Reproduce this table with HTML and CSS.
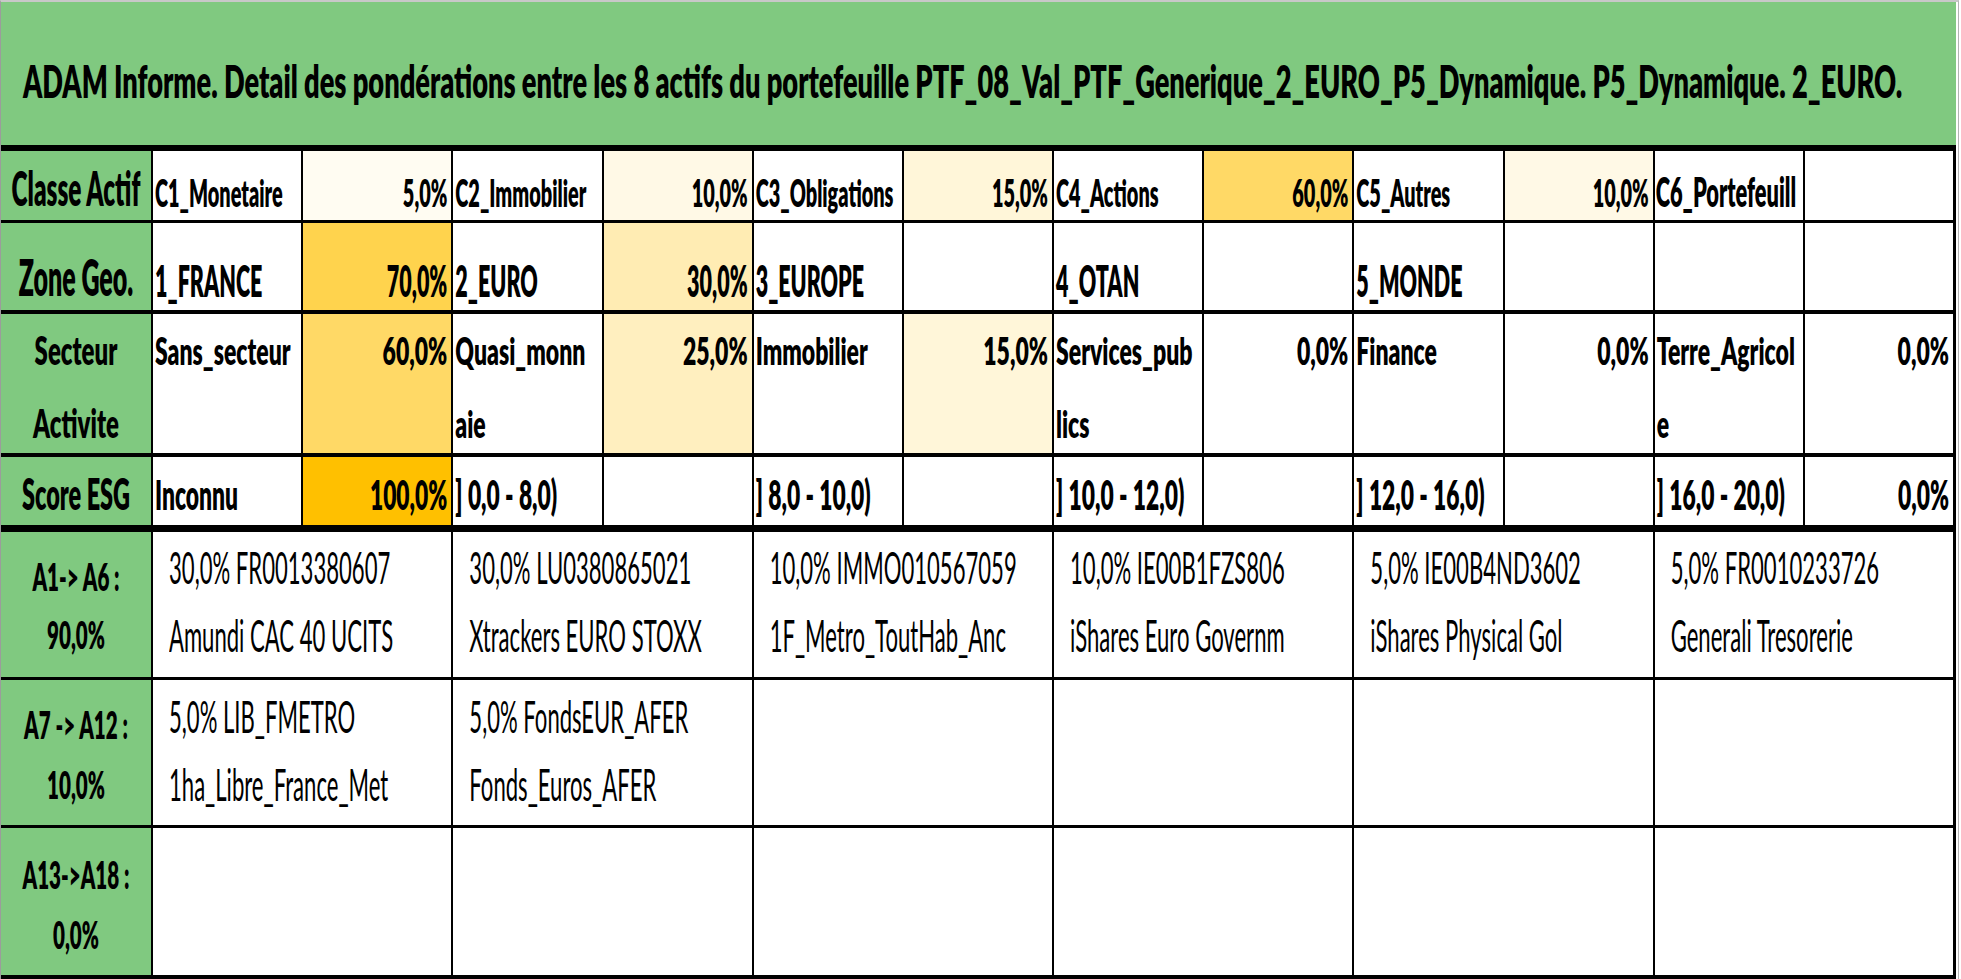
FILE: index.html
```html
<!DOCTYPE html>
<html lang="fr">
<head>
<meta charset="utf-8">
<title>ADAM Informe</title>
<link rel="stylesheet" href="styles.css">
</head>
<body>
<div class="sheet">
  <div class="title"><div class="ln">ADAM Informe. Detail des pondérations entre les 8 actifs du portefeuille PTF_08_Val_PTF_Generique_2_EURO_P5_Dynamique. P5_Dynamique. 2_EURO.</div></div>

  <div class="row r1">
    <div class="lab"><div class="ln">Classe Actif</div></div>
    <div class="nm"><div class="ln">C1_Monetaire</div></div>
    <div class="pc h5"><div class="ln">5,0%</div></div>
    <div class="nm"><div class="ln">C2_Immobilier</div></div>
    <div class="pc h10"><div class="ln">10,0%</div></div>
    <div class="nm"><div class="ln">C3_Obligations</div></div>
    <div class="pc h15"><div class="ln">15,0%</div></div>
    <div class="nm"><div class="ln">C4_Actions</div></div>
    <div class="pc h60"><div class="ln">60,0%</div></div>
    <div class="nm"><div class="ln">C5_Autres</div></div>
    <div class="pc h10"><div class="ln">10,0%</div></div>
    <div class="nm wide"><div class="ln">C6_Portefeuill</div></div>
    <div class="pc"></div>
  </div>

  <div class="row r2">
    <div class="lab"><div class="ln">Zone Geo.</div></div>
    <div class="nm"><div class="ln">1_FRANCE</div></div>
    <div class="pc h70"><div class="ln">70,0%</div></div>
    <div class="nm"><div class="ln">2_EURO</div></div>
    <div class="pc h30"><div class="ln">30,0%</div></div>
    <div class="nm"><div class="ln">3_EUROPE</div></div>
    <div class="pc"></div>
    <div class="nm"><div class="ln">4_OTAN</div></div>
    <div class="pc"></div>
    <div class="nm"><div class="ln">5_MONDE</div></div>
    <div class="pc"></div>
    <div class="nm"></div>
    <div class="pc"></div>
  </div>

  <div class="row r3">
    <div class="lab"><div class="ln">Secteur</div><div class="ln">Activite</div></div>
    <div class="nm"><div class="ln">Sans_secteur</div></div>
    <div class="pc h60"><div class="ln">60,0%</div></div>
    <div class="nm"><div class="ln">Quasi_monn</div><div class="ln">aie</div></div>
    <div class="pc h25"><div class="ln">25,0%</div></div>
    <div class="nm"><div class="ln">Immobilier</div></div>
    <div class="pc h15"><div class="ln">15,0%</div></div>
    <div class="nm"><div class="ln">Services_pub</div><div class="ln">lics</div></div>
    <div class="pc"><div class="ln">0,0%</div></div>
    <div class="nm"><div class="ln">Finance</div></div>
    <div class="pc"><div class="ln">0,0%</div></div>
    <div class="nm"><div class="ln">Terre_Agricol</div><div class="ln">e</div></div>
    <div class="pc"><div class="ln">0,0%</div></div>
  </div>

  <div class="row r4">
    <div class="lab"><div class="ln">Score ESG</div></div>
    <div class="nm"><div class="ln">Inconnu</div></div>
    <div class="pc h100"><div class="ln">100,0%</div></div>
    <div class="nm"><div class="ln">] 0,0 - 8,0)</div></div>
    <div class="pc"></div>
    <div class="nm"><div class="ln">] 8,0 - 10,0)</div></div>
    <div class="pc"></div>
    <div class="nm"><div class="ln">] 10,0 - 12,0)</div></div>
    <div class="pc"></div>
    <div class="nm"><div class="ln">] 12,0 - 16,0)</div></div>
    <div class="pc"></div>
    <div class="nm"><div class="ln">] 16,0 - 20,0)</div></div>
    <div class="pc"><div class="ln">0,0%</div></div>
  </div>

  <div class="row ar r5">
    <div class="lab"><div class="ln">A1-&gt; A6 :</div><div class="ln">90,0%</div></div>
    <div class="as"><div class="ln">30,0% FR0013380607</div><div class="ln">Amundi CAC 40 UCITS</div></div>
    <div class="as"><div class="ln">30,0% LU0380865021</div><div class="ln">Xtrackers EURO STOXX</div></div>
    <div class="as"><div class="ln">10,0% IMMO010567059</div><div class="ln">1F_Metro_ToutHab_Anc</div></div>
    <div class="as"><div class="ln">10,0% IE00B1FZS806</div><div class="ln">iShares Euro Governm</div></div>
    <div class="as"><div class="ln">5,0% IE00B4ND3602</div><div class="ln">iShares Physical Gol</div></div>
    <div class="as"><div class="ln">5,0% FR0010233726</div><div class="ln">Generali Tresorerie</div></div>
  </div>

  <div class="row ar r6">
    <div class="lab"><div class="ln">A7 -&gt; A12 :</div><div class="ln">10,0%</div></div>
    <div class="as"><div class="ln">5,0% LIB_FMETRO</div><div class="ln">1ha_Libre_France_Met</div></div>
    <div class="as"><div class="ln">5,0% FondsEUR_AFER</div><div class="ln">Fonds_Euros_AFER</div></div>
    <div class="as"></div>
    <div class="as"></div>
    <div class="as"></div>
    <div class="as"></div>
  </div>

  <div class="row ar r7">
    <div class="lab"><div class="ln">A13-&gt;A18 :</div><div class="ln">0,0%</div></div>
    <div class="as"></div>
    <div class="as"></div>
    <div class="as"></div>
    <div class="as"></div>
    <div class="as"></div>
    <div class="as"></div>
  </div>
</div>
</body>
</html>
```

FILE: styles.css
```css
* { box-sizing: content-box; }
html, body { margin: 0; padding: 0; background: #ffffff; }
body {
  font-family: Lato, "Liberation Sans", sans-serif;
  color: #000;
  width: 1961px;
  height: 979px;
  overflow: hidden;
}
.sheet {
  width: 1955px;
  border-top: 2px solid #c8c8c8;
  border-left: 1px solid #9c9c9c;
  border-right: 1px solid #b4b4b4;
  padding-right: 2px;
}
.ln {
  height: 30px;
  line-height: 30px;
  white-space: nowrap;
  transform: scaleY(var(--sy, 1));
  transform-origin: 50% 50%;
}

/* Title band */
.title {
  height: 143px;
  background: #80c980;
  border-bottom: 6px solid #000;
  padding-left: 22px;
  display: flex;
  flex-direction: column;
  justify-content: flex-start;
}
.title .ln {
  margin-top: 64px;
  font-weight: 800;
  font-size: 27.2px;
  --sy: 1.66;
}

/* Rows */
.row {
  display: grid;
  grid-template-columns: 150px repeat(12, 1fr);
  column-gap: 2px;
  background: #000;
  border-right: 3px solid #000;
  border-bottom: 3px solid #000;
}
.row > div {
  background: #fff;
  overflow: hidden;
  display: flex;
  flex-direction: column;
  min-width: 0;
}
.row .lab {
  background: #80c980;
  text-align: center;
  font-weight: 800;
}
.nm { padding-left: 2px; font-weight: 800; }
.pc { padding-right: 4px; text-align: right; font-weight: 800; }
.as { grid-column: span 2; padding-left: 16px; font-weight: 400; }

/* heat-map shades */
.row .h5 { background: #fffcf2; }
.row .h10 { background: #fff9e6; }
.row .h15 { background: #fff6d9; }
.row .h25 { background: #ffefbf; }
.row .h30 { background: #ffecb3; }
.row .h60 { background: #ffd966; }
.row .h70 { background: #ffd34d; }
.row .h100 { background: #ffc000; }

.r1 { height: 69px; }
.r1 .lab { padding-top: 22px; font-size: 24.4px; --sy: 1.95; }
.r1 .nm, .r1 .pc { padding-top: 26px; font-size: 19.9px; --sy: 1.93; }
.r1 .wide { font-size: 21.8px; padding-left: 1px; }

.r2 { height: 87px; border-bottom-width: 4px; }
.r2 .lab { padding-top: 38px; font-size: 25px; --sy: 2.02; }
.r2 .nm, .r2 .pc { padding-top: 43px; font-size: 21.5px; --sy: 2.05; }

.r3 { height: 139px; border-bottom-width: 4px; }
.r3 > div { padding-top: 21px; gap: 43px; }
.r3 .lab { font-size: 24px; --sy: 1.62; }
.r3 .nm, .r3 .pc { font-size: 23px; --sy: 1.66; }

.r4 { height: 68px; border-bottom-width: 7px; }
.r4 .lab { padding-top: 21px; font-size: 23.5px; --sy: 1.86; }
.r4 .nm, .r4 .pc { padding-top: 22px; font-size: 22.8px; --sy: 1.8; }

.ar .lab { font-size: 20.6px; --sy: 1.8; }
.ar .as { padding-top: 21px; gap: 38px; font-size: 22.1px; --sy: 1.98; }
.r5 { height: 145px; }
.r5 .lab { padding-top: 30px; gap: 28px; }
.r6 { height: 145px; }
.r6 .lab { padding-top: 30px; gap: 30px; }
.r6 .as { padding-top: 22px; }
.r7 { height: 147px; border-bottom-width: 4px; }
.r7 .lab { padding-top: 32px; gap: 30px; }
```
